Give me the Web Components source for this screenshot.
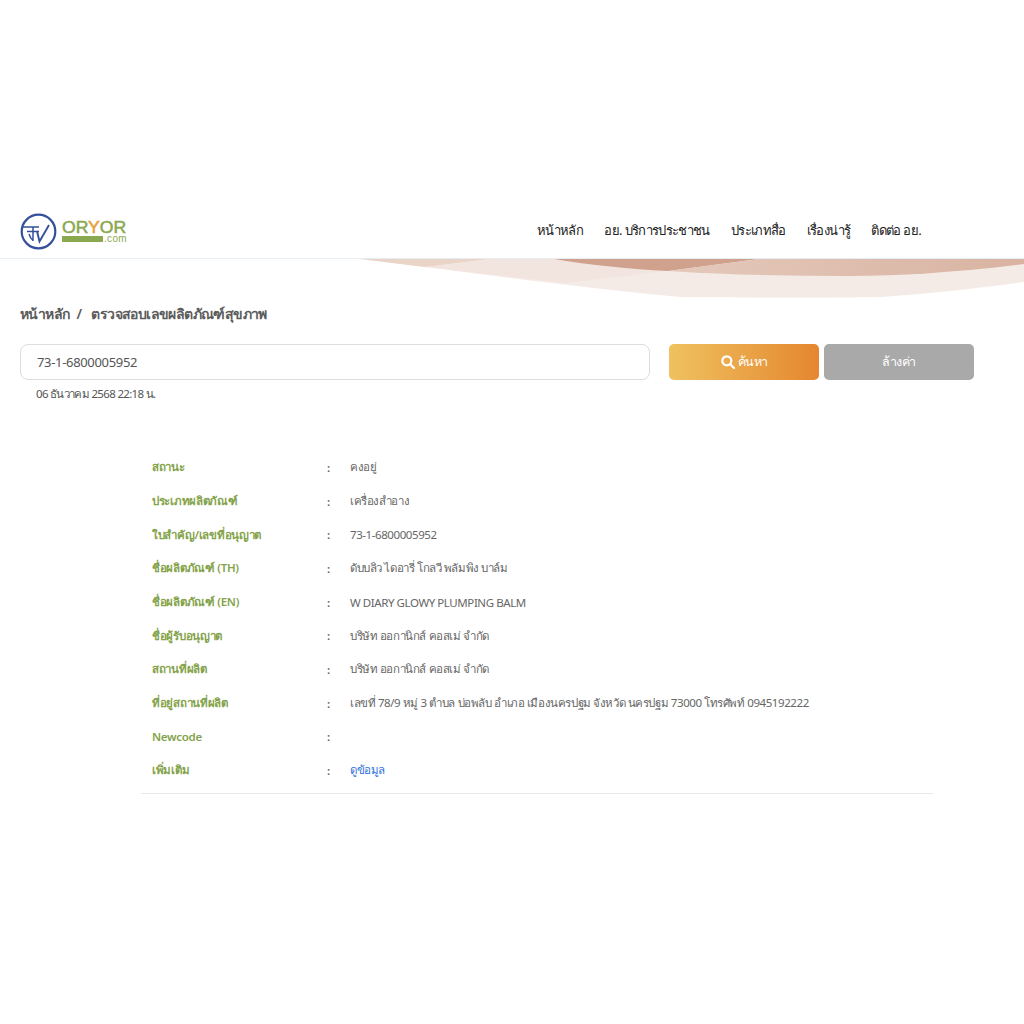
<!DOCTYPE html>
<html lang="th">
<head>
<meta charset="utf-8">
<title>ตรวจสอบเลขผลิตภัณฑ์สุขภาพ</title>
<style>
    html, body { margin: 0; padding: 0; background: #fff; }
    body { font-family: "Noto Sans", "Open Sans", sans-serif; color: #555; }
</style>
</head>
<body>
<site-header>
    <nav-link>หน้าหลัก</nav-link>
    <nav-link>อย. บริการประชาชน</nav-link>
    <nav-link>ประเภทสื่อ</nav-link>
    <nav-link>เรื่องน่ารู้</nav-link>
    <nav-link>ติดต่อ อย.</nav-link>
</site-header>
<bread-crumb current="ตรวจสอบเลขผลิตภัณฑ์สุขภาพ">หน้าหลัก</bread-crumb>
<search-bar value="73-1-6800005952" stamp="06 ธันวาคม 2568 22:18 น."></search-bar>
<info-table>
    <info-row label="สถานะ">คงอยู่</info-row>
    <info-row label="ประเภทผลิตภัณฑ์">เครื่องสำอาง</info-row>
    <info-row label="ใบสำคัญ/เลขที่อนุญาต">73-1-6800005952</info-row>
    <info-row label="ชื่อผลิตภัณฑ์ (TH)">ดับบลิว ไดอารี่ โกลวี พลัมพิง บาล์ม</info-row>
    <info-row label="ชื่อผลิตภัณฑ์ (EN)">W DIARY GLOWY PLUMPING BALM</info-row>
    <info-row label="ชื่อผู้รับอนุญาต">บริษัท ออกานิกส์ คอสเม่ จำกัด</info-row>
    <info-row label="สถานที่ผลิต">บริษัท ออกานิกส์ คอสเม่ จำกัด</info-row>
    <info-row label="ที่อยู่สถานที่ผลิต">เลขที่ 78/9 หมู่ 3 ตำบล บ่อพลับ อำเภอ เมืองนครปฐม จังหวัด นครปฐม 73000 โทรศัพท์ 0945192222</info-row>
    <info-row label="Newcode"></info-row>
    <info-row label="เพิ่มเติม" link><a href="#">ดูข้อมูล</a></info-row>
</info-table>

<script>
/* Top bar with logo, menu and the wave picture under its border */
class siteHeader extends HTMLElement {
    constructor() {
        super();
        this.attachShadow({mode: 'open'}).innerHTML = `
            <style>
                :host { display: block; position: relative; margin-top: 204px; }
                .bar {
                    display: flex;
                    align-items: center;
                    justify-content: space-between;
                    height: 54px;
                    padding: 0 103px 0 20px;
                    border-bottom: 1px solid #e6edf3;
                }
                .logo { display: flex; align-items: center; gap: 5px; }
                .mark { display: block; width: 37px; height: 37px; }
                .word { display: flex; flex-direction: column; width: 66px; }
                .name {
                    font: 400 16px/13px "Liberation Sans", sans-serif;
                    -webkit-text-stroke: 0.5px #8aa84f;
                    color: #8aa84f;
                    transform: scaleX(1.1);
                    transform-origin: left;
                }
                .name b { font-weight: 400; color: #e8a13a; -webkit-text-stroke: 0.5px #e8a13a; }
                .sub { display: flex; align-items: center; gap: 1px; height: 6px; margin-top: 2px; }
                .sub i { display: block; flex: none; width: 41px; height: 6px; background: #8aa84f; }
                .sub span { font: 400 10px/6px "Liberation Sans", sans-serif; color: #8aa84f; letter-spacing: .3px; }
                nav { display: flex; gap: 21px; margin-top: -2px; }
                svg.wave { position: absolute; left: 0; top: 55px; width: 1024px; height: 40px; display: block; }
            </style>
            <div class="bar">
                <div class="logo">
                    <svg class="mark" viewBox="0 0 37 37" fill="none" stroke="#34509c">
                        <circle cx="18.5" cy="18.5" r="16.8" stroke-width="2.2"/>
                        <path d="M2 14H19M7 18.5H19M13 14V28M9 21C10 24 11 26 13 27.5" stroke-width="1.5"/>
                        <path d="M17 18L19.5 28.5L29 12" stroke-width="1.9"/>
                    </svg>
                    <div class="word">
                        <div class="name">OR<b>Y</b>OR</div>
                        <div class="sub"><i></i><span>.com</span></div>
                    </div>
                </div>
                <nav><slot></slot></nav>
            </div>
            <svg class="wave" viewBox="0 0 1024 40">
                <defs>
                    <linearGradient id="mid" x1="0" x2="1" y1="0" y2="0">
                        <stop offset="0" stop-color="#e4c9bb"/>
                        <stop offset="1" stop-color="#d9b3a2"/>
                    </linearGradient>
                </defs>
                <path fill="#f5ebe6" d="M360 0L425 8C480 15 560 26 680 38C760 39 830 39 880 38C930 35 980 29 1024 23V0Z"/>
                <path fill="#e9d4c7" d="M360 0L425 8L490 0Z"/>
                <path fill="#f2e5df" d="M490 0H554C590 6 630 10 668 12L565 24C520 19 470 13 425 8Z"/>
                <path fill="#d0a28d" d="M554 0H759L668 12C630 10 590 6 554 0Z"/>
                <path fill="url(#mid)" d="M759 0H1024V5C960 13 900 17 850 17C790 17 730 16 668 12Z"/>
            </svg>
        `;
    }
}

class navLink extends HTMLElement {
    constructor() {
        super();
        this.attachShadow({mode: 'open'}).innerHTML = `
            <style>
                :host {
                    display: block;
                    font-size: 13px;
                    letter-spacing: -0.64px;
                    line-height: 20px;
                    color: #222;
                    white-space: nowrap;
                    cursor: pointer;
                }
            </style>
            <slot></slot>
        `;
    }
}

class breadCrumb extends HTMLElement {
    connectedCallback() {
        if (this.shadowRoot) return;
        this.attachShadow({mode: 'open'}).innerHTML = `
            <style>
                :host {
                    display: block;
                    margin: 45px 0 0 20px;
                    font-size: 14px;
                    letter-spacing: -0.6px;
                    line-height: 20px;
                    font-weight: 600;
                    color: #5c5c5c;
                }
                span { margin: 0 10px 0 7px; }
            </style>
            <slot></slot><span>/</span>${this.getAttribute('current')}
        `;
    }
}

class searchBar extends HTMLElement {
    connectedCallback() {
        if (this.shadowRoot) return;
        this.attachShadow({mode: 'open'}).innerHTML = `
            <style>
                :host { display: block; margin: 20px 50px 0 20px; }
                .row { display: flex; align-items: stretch; height: 36px; }
                .field {
                    box-sizing: border-box;
                    width: 630px;
                    margin-right: 19px;
                    padding: 0 16px;
                    border: 1px solid #ddd;
                    border-radius: 8px;
                    font-size: 13px;
                    letter-spacing: -0.33px;
                    line-height: 34px;
                    color: #555;
                }
                .btn {
                    display: flex;
                    align-items: center;
                    justify-content: center;
                    gap: 3px;
                    width: 150px;
                    border-radius: 5px;
                    font-size: 12.5px;
                    letter-spacing: -0.5px;
                    color: #fff;
                    cursor: pointer;
                }
                .go { background: linear-gradient(90deg, #efc25f, #e58630); margin-right: 5px; }
                .clear { background: #a9a9a9; }
                svg { display: block; width: 14px; height: 14px; }
                .stamp { margin: 5px 0 0 16px; font-size: 11.5px; letter-spacing: -0.67px; line-height: 18px; color: #555; }
            </style>
            <div class="row">
                <div class="field" role="textbox">${this.getAttribute('value')}</div>
                <div class="btn go">
                    <svg viewBox="0 0 14 14" fill="none" stroke="#fff" stroke-width="2.2">
                        <circle cx="5.8" cy="5.8" r="4.5"/><path d="M9.2 9.2L13 13" stroke-linecap="round"/>
                    </svg>
                    ค้นหา
                </div>
                <div class="btn clear">ล้างค่า</div>
            </div>
            <div class="stamp">${this.getAttribute('stamp')}</div>
        `;
    }
}

class infoTable extends HTMLElement {
    constructor() {
        super();
        this.attachShadow({mode: 'open'}).innerHTML = `
            <style>
                :host {
                    display: block;
                    width: 792px;
                    margin: 47.6px 0 0 141px;
                    padding-bottom: 5.4px;
                    border-bottom: 1px solid #e8e8e8;
                }
            </style>
            <slot></slot>
        `;
    }
}

class infoRow extends HTMLElement {
    connectedCallback() {
        if (this.shadowRoot) return;
        this.attachShadow({mode: 'open'}).innerHTML = `
            <style>
                :host {
                    display: grid;
                    grid-template-columns: 175px 23px 1fr;
                    align-items: center;
                    height: 33.67px;
                    padding-left: 11px;
                    font-size: 11.5px;
                    letter-spacing: -0.42px;
                    color: #666;
                }
                .k { color: #84a34b; font-weight: 600; letter-spacing: -0.3px; }
                .c { font-weight: 600; }
                ::slotted(a) { color: #2f6fe0; text-decoration: none; }
            </style>
            <div class="k">${this.getAttribute('label')}</div>
            <div class="c">:</div>
            <div><slot></slot></div>
        `;
    }
}

customElements.define('site-header', siteHeader);
customElements.define('nav-link', navLink);
customElements.define('bread-crumb', breadCrumb);
customElements.define('search-bar', searchBar);
customElements.define('info-table', infoTable);
customElements.define('info-row', infoRow);
</script>
</body>
</html>
